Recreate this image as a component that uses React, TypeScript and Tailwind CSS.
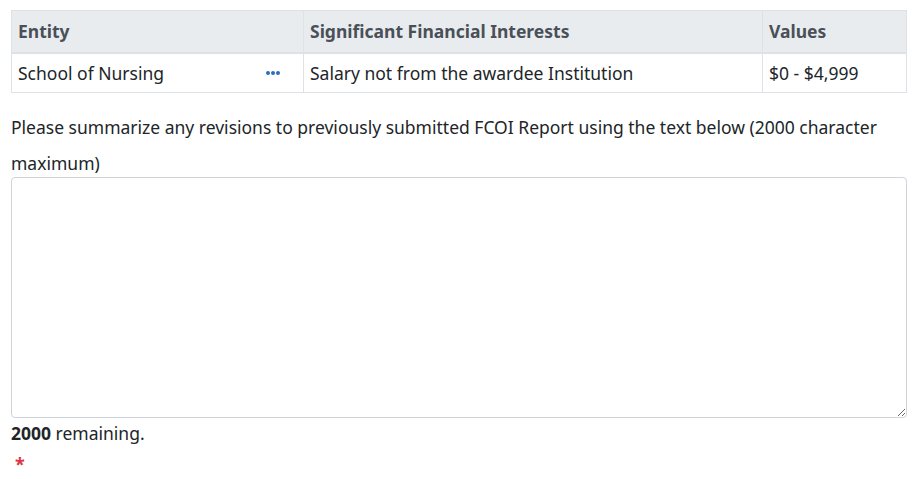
export default function App() {
    return (
        <div className="bg-white w-[924px] h-[479px] overflow-hidden pl-[11px] pr-[17px] pt-[10px] text-[#212529]" style={{ fontFamily: '"Noto Sans", "Open Sans", sans-serif' }}>
            <table className="w-full border-collapse text-[17.5px]">
                <thead>
                    <tr className="bg-[#e9ecef] text-[#495057]">
                        <th className="w-[292px] h-[42px] border border-[#dee2e6] border-b-2 px-[6px] text-left font-bold">Entity</th>
                        <th className="w-[459px] border border-[#dee2e6] border-b-2 px-[6px] text-left font-bold">Significant Financial Interests</th>
                        <th className="border border-[#dee2e6] border-b-2 px-[6px] text-left font-bold">Values</th>
                    </tr>
                </thead>
                <tbody>
                    <tr>
                        <td className="h-[40px] border border-[#dee2e6] px-[6px]">
                            <div className="flex items-center justify-between">
                                <span>School of Nursing</span>
                                <svg width="16" height="6" viewBox="0 0 16 6" className="mr-[16px]">
                                    <circle cx="3" cy="3" r="2" fill="#2a6fb8" />
                                    <circle cx="8" cy="3" r="2" fill="#2a6fb8" />
                                    <circle cx="13" cy="3" r="2" fill="#2a6fb8" />
                                </svg>
                            </div>
                        </td>
                        <td className="border border-[#dee2e6] px-[6px]">Salary not from the awardee Institution</td>
                        <td className="border border-[#dee2e6] px-[6px]">$0 - $4,999</td>
                    </tr>
                </tbody>
            </table>
            <label className="block mt-[16px] leading-[36px] text-[17.5px]">
                Please summarize any revisions to previously submitted FCOI Report using the text below (2000 character maximum)
            </label>
            <textarea className="block w-full h-[241px] -mt-[4px] border border-[#ced4da] rounded-[4px] resize-y outline-none" />
            <p className="mt-[2px] leading-[26px] text-[17.5px]">
                <span className="font-bold">2000</span> remaining.
            </p>
            <div className="mt-[8px] text-[#dc3545] text-[18px] font-bold leading-[20px] pl-[4px]">*</div>
        </div>
    );
}
